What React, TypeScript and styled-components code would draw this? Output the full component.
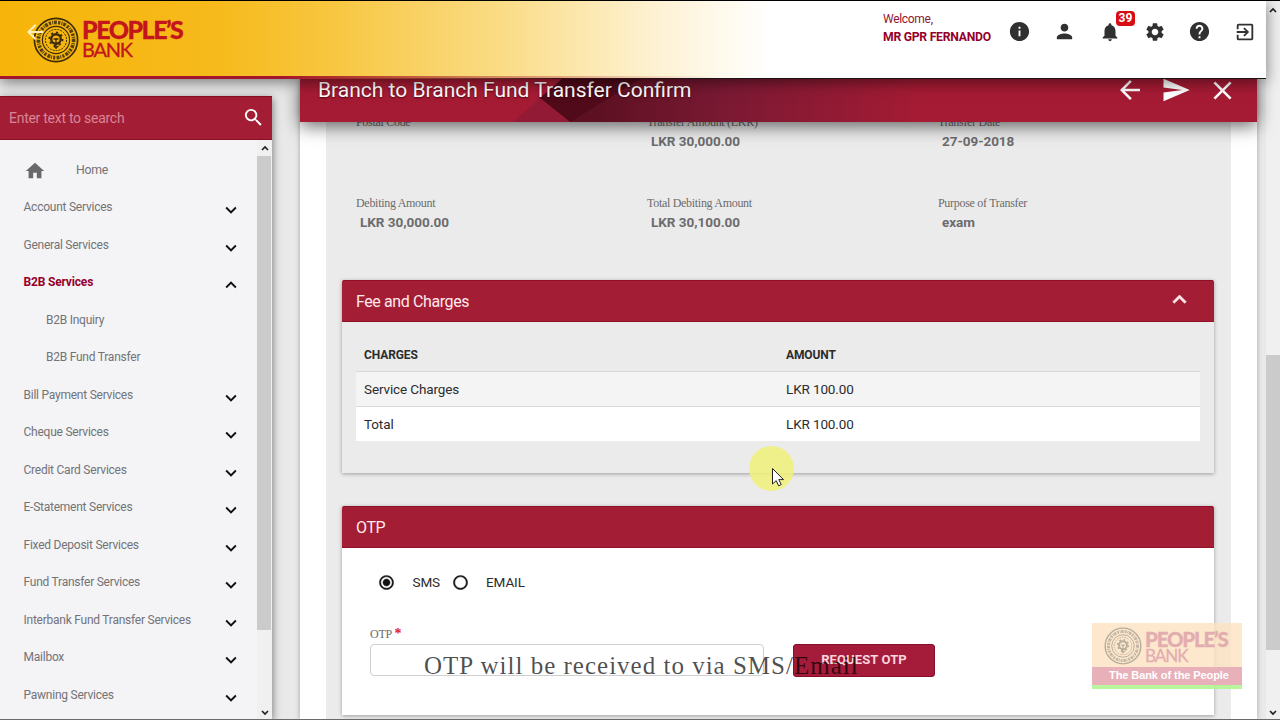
import React from 'react';
import styled, { createGlobalStyle } from 'styled-components';
import {
  MdArrowBack, MdClose, MdExitToApp, MdExpandLess, MdExpandMore, MdHelp, MdHome, MdInfo,
  MdNotifications, MdPerson, MdRadioButtonChecked, MdRadioButtonUnchecked, MdSearch, MdSend, MdSettings,
} from 'react-icons/md';

const crimson = '#a31d34';

const GlobalStyle = createGlobalStyle`
  * { box-sizing: border-box; }
  body { margin: 0; background: #e9e9e9; font-family: Roboto, "Liberation Sans", sans-serif; }
  svg { display: block; flex: none; }
`;

const Screen = styled.div`
  position: relative;
  width: 1280px;
  height: 720px;
  display: flex;
  overflow: hidden;
  border-top: 1px solid #000;
  border-bottom: 1px solid #6a6a6a;
  background: #e9e9e9;
`;

const Page = styled.div`
  width: 1266px;
  display: flex;
  flex-direction: column;
`;

const Header = styled.header`
  position: relative;
  z-index: 3;
  height: 78px;
  display: flex;
  justify-content: space-between;
  background:
    linear-gradient(90deg, rgba(60, 16, 24, 0) 300px, #3a1018 560px, #1c1416 700px) 0 100% / 100% 1px no-repeat,
    linear-gradient(90deg, #a3152a 0, #a3152a 280px, rgba(163, 21, 42, 0.45) 480px, rgba(163, 21, 42, 0) 720px) 0 100% / 100% 3px no-repeat,
    linear-gradient(90deg, #f7b50a 0, #f6ba1c 220px, #f8c63f 330px, #fadc85 500px, #fdf1d0 650px, #fff 770px);
  box-shadow: 0 3px 14px rgba(0, 0, 0, 0.5);
`;

const Brand = styled.div`
  position: relative;
  display: flex;
  gap: 3px;
  padding: 16px 0 0 33px;
`;

const BackArrow = styled.div`
  position: absolute;
  left: 23px;
  top: 19px;
  color: #fff0b8;
`;

const BrandName = styled.div`
  display: flex;
  flex-direction: column;
  padding-top: 2px;
  color: #c4141c;
  font-family: Lato, sans-serif;
`;

const BrandTop = styled.span`
  font-size: 25px;
  line-height: 21px;
  font-weight: 900;
  letter-spacing: -1.5px;
  -webkit-text-stroke: 0.3px currentColor;
`;

const BrandBottom = styled.span`
  font-size: 20px;
  line-height: 18px;
  letter-spacing: -1.3px;
  -webkit-text-stroke: 0.3px currentColor;
`;

const UserArea = styled.div`
  display: flex;
  margin-right: -1px;
`;

const Welcome = styled.div`
  display: flex;
  flex-direction: column;
  width: 114px;
  padding-top: 9px;
  font-size: 12px;
  line-height: 18px;
  letter-spacing: -0.3px;
  color: #8f1730;
  white-space: nowrap;
`;

const UserName = styled.b`
  font-size: 12.2px;
  letter-spacing: -0.26px;
  color: #96002a;
`;

const IconButton = styled.div`
  position: relative;
  width: 45px;
  height: 61px;
  display: flex;
  align-items: center;
  justify-content: center;
  color: #303030;
`;

const Badge = styled.span`
  position: absolute;
  left: 29px;
  top: 10px;
  width: 19px;
  height: 15px;
  border-radius: 4px;
  background: #d80c12;
  color: #fff;
  font-size: 12px;
  line-height: 15px;
  font-weight: 700;
  text-align: center;
`;

const Body = styled.div`
  flex: 1;
  min-height: 0;
  display: flex;
  gap: 28px;
`;

const Sidebar = styled.aside`
  width: 272px;
  margin-top: 17px;
  display: flex;
  flex-direction: column;
  box-shadow: 1px 2px 8px rgba(0, 0, 0, 0.45);
`;

const SearchBox = styled.div`
  height: 44px;
  flex: none;
  display: flex;
  align-items: center;
  justify-content: space-between;
  padding: 0 7px 1px 9px;
  background: ${crimson};
  border-top: 1px solid #8b0f26;
  border-bottom: 1px solid #8b0f26;
  color: #fff;
`;

const Placeholder = styled.span`
  padding-top: 1px;
  font-size: 14px;
  letter-spacing: -0.27px;
  color: #d98596;
`;

const MenuArea = styled.div`
  flex: 1;
  min-height: 0;
  display: flex;
  background: #f4f4f7;
`;

const Menu = styled.nav`
  flex: 1;
  padding-top: 11px;
  overflow: hidden;
`;

const MenuRow = styled.div<{ $indent?: boolean; $active?: boolean }>`
  height: 37.5px;
  display: flex;
  align-items: center;
  justify-content: space-between;
  padding: 0 15px 0 ${p => (p.$indent ? 46 : 23.5)}px;
  font-size: 12px;
  font-weight: ${p => (p.$active ? 700 : 400)};
  letter-spacing: ${p => (p.$active ? -0.17 : -0.24)}px;
  color: ${p => (p.$active ? '#96002a' : '#737376')};
  white-space: nowrap;

  svg { margin-top: 6px; color: #111; }
`;

const HomeRow = styled.div`
  height: 37.5px;
  display: flex;
  align-items: center;
  gap: 30px;
  padding-left: 24px;
  font-size: 12.3px;
  letter-spacing: -0.3px;
  color: #737376;
  svg { margin-top: 2px; }
`;

const Track = styled.div<{ $w: number }>`
  width: ${p => p.$w}px;
  flex: none;
  display: flex;
  flex-direction: column;
  align-items: center;
  background: #f0f0f0;
`;

const Space = styled.div<{ $h?: number }>`
  ${p => (p.$h === undefined ? 'flex: 1;' : `height: ${p.$h}px; flex: none;`)}
`;

const Thumb = styled.div<{ $h: number }>`
  height: ${p => p.$h}px;
  align-self: stretch;
  background: #cbcbcb;
`;

const MenuThumb = styled(Thumb)`
  margin-right: 1px;
`;

const Main = styled.main`
  width: 957px;
  display: flex;
  flex-direction: column;
  background: #fff;
  box-shadow: 0 0 5px rgba(0, 0, 0, 0.3);
`;

const TitleBar = styled.div`
  position: relative;
  z-index: 2;
  height: 43px;
  flex: none;
  display: flex;
  justify-content: space-between;
  align-items: flex-start;
  padding: 0 19px 0 18px;
  background: #a51b34;
  box-shadow: 0 4px 18px rgba(0, 0, 0, 0.6);
`;

const TitleArt = styled.svg`
  position: absolute;
  left: 0;
  top: 0;
`;

const Title = styled.h1`
  position: relative;
  margin: 0;
  font-size: 21px;
  line-height: 23px;
  font-weight: 400;
  color: #fff;
  text-shadow: 0 1px 2px rgba(60, 0, 10, 0.8);
`;

const TitleActions = styled.div`
  position: relative;
  display: flex;
  gap: 16px;
  margin-top: -4px;
  color: #fff;
`;

const Content = styled.div`
  flex: 1;
  min-height: 0;
  overflow: hidden;
  margin: 0 26px;
  padding: 0 17px 0 16px;
  background: #ebebeb;
`;

const FieldGrid = styled.div`
  display: grid;
  grid-template-columns: 291px 291px 1fr;
  grid-auto-rows: 81.5px;
  height: 164px;
  margin-top: -9.5px;
  padding-left: 14px;
`;

const Field = styled.div`
  display: flex;
  flex-direction: column;
`;

const FieldLabel = styled.span`
  font: 12px/18px "Liberation Serif", serif;
  letter-spacing: -0.3px;
  color: #6c6c6c;
`;

const FieldValue = styled.b`
  padding-left: 4px;
  font-size: 13.5px;
  line-height: 21px;
  letter-spacing: -0.03px;
  color: #6b6b6e;
`;

const Panel = styled.section<{ $top: number; $h: number; $bg: string }>`
  margin-top: ${p => p.$top}px;
  height: ${p => p.$h}px;
  background: ${p => p.$bg};
  box-shadow: 0 1px 4px rgba(0, 0, 0, 0.33);
`;

const PanelHead = styled.div`
  height: 42px;
  display: flex;
  align-items: center;
  justify-content: space-between;
  padding: 0 21px 0 14px;
  border: 1px solid #8f1028;
  border-width: 1px 0;
  border-radius: 2px 2px 0 0;
  background: ${crimson};
  color: #ffe9ec;
  font-size: 16px;
  letter-spacing: -0.4px;
  svg { margin-top: -4px; stroke: currentColor; stroke-width: 0.6; }
  svg path[fill="none"] { stroke: none; }
`;

const Charges = styled.div`
  padding: 16px 14px 0;
`;

const ChargeRow = styled.div<{ $kind: 'head' | 'odd' | 'even' }>`
  height: ${p => (p.$kind === 'head' ? 34 : 34.5)}px;
  display: grid;
  grid-template-columns: 422px 1fr;
  align-items: center;
  padding-left: 8px;
  border-bottom: ${p => (p.$kind === 'even' ? '0' : '1px')} solid #d8d8d8;
  background: ${p => ({ head: 'transparent', odd: '#f5f4f5', even: '#fff' })[p.$kind]};
  font-size: ${p => (p.$kind === 'head' ? 12 : 13.5)}px;
  font-weight: ${p => (p.$kind === 'head' ? 700 : 400)};
  letter-spacing: -0.12px;
  color: #2c2c2e;
`;

const Radios = styled.div`
  display: flex;
  align-items: center;
  height: 69px;
  margin-bottom: 1px;
  padding-left: 36px;
  font-size: 13.5px;
  letter-spacing: -0.1px;
  color: #2c2c2e;
  svg { color: #111; stroke: #111; stroke-width: 0.6; }
  svg path[fill="none"] { stroke: none; }
`;

const RadioLabel = styled.span<{ $w: number }>`
  width: ${p => p.$w}px;
  padding: 0 0 1px 17.5px;
`;

const OtpForm = styled.div`
  display: flex;
  gap: 29px;
  align-items: flex-end;
  height: 59px;
  padding-left: 28px;
`;

const OtpField = styled.div`
  width: 394px;
  height: 53px;
`;

const OtpLabel = styled.div`
  height: 20px;
  font: 12px/19px "Liberation Serif", serif;
  color: #6c6c6c;
  letter-spacing: -0.2px;
  span { color: #e0202a; font-size: 14px; font-weight: 700; }
`;

const OtpInput = styled.div`
  height: 32px;
  border: 1px solid #cfcfcf;
  border-radius: 4px;
  background: #fff;
`;

const RequestButton = styled.div`
  width: 142px;
  height: 33px;
  border: 1px solid #8b0c2c;
  border-radius: 3px;
  background: #a51b3a;
  color: #fbd5de;
  font-size: 13px;
  letter-spacing: 0.12px;
  font-weight: 700;
  line-height: 30px;
  text-align: center;
`;

const Caption = styled.div`
  position: absolute;
  left: 424px;
  top: 650px;
  font: 25px/30px "Liberation Serif", serif;
  letter-spacing: 1px;
  color: rgba(0, 0, 0, 0.7);
  white-space: nowrap;
`;

const Pointer = styled.svg`
  position: absolute;
  left: 748px;
  top: 444px;
`;

const Watermark = styled.div`
  position: absolute;
  left: 1092px;
  top: 622px;
  width: 150px;
  height: 66px;
  display: flex;
  flex-direction: column;
  border-bottom: 4px solid rgba(175, 245, 145, 0.9);
  background: rgba(252, 226, 194, 0.8) padding-box;
`;

const WatermarkTop = styled.div`
  height: 44px;
  display: flex;
  gap: 3px;
  padding: 4px 0 0 12px;
`;

const WatermarkName = styled(BrandName)`
  padding-top: 0;
  color: #e3adb0;
  ${BrandTop} { font-size: 20.5px; line-height: 19px; letter-spacing: -1.2px; padding-top: 3px; }
  ${BrandBottom} { font-size: 17px; line-height: 13px; letter-spacing: -1px; }
`;

const Slogan = styled.div`
  flex: 1;
  padding-left: 17px;
  background: #e8b1b9;
  color: #fff;
  font: 700 11px/17px "Liberation Sans", sans-serif;
  letter-spacing: -0.08px;
  white-space: nowrap;
`;

function Emblem({ size, color }: { size: number; color: string }) {
  return (
    <svg width={size} height={size} viewBox="0 0 46 46" fill="none" stroke={color}>
      <circle cx="23" cy="23" r="21.6" strokeWidth="1.7" />
      <circle cx="23" cy="23" r="17.6" strokeWidth="3.6" strokeDasharray="2.2 1.1 1 .8 3 1.3" opacity=".85" />
      <circle cx="23" cy="23" r="13.6" strokeWidth="1.2" />
      <circle cx="23" cy="23" r="10.6" strokeWidth="1" strokeDasharray="2 1" />
      <circle cx="23" cy="22" r="4.8" strokeWidth="2.4" />
      <circle cx="23" cy="22" r="6.6" strokeWidth="1.8" strokeDasharray="2.2 2.94" />
      <path d="M20.5 22h5M23 21v11M20.5 29l2.5 2 2.5-2" strokeWidth="1.3" />
    </svg>
  );
}

function ScrollArrow({ up }: { up?: boolean }) {
  return (
    <svg width="10" height="8" viewBox="0 0 10 8" fill="none" stroke="#222" strokeWidth="1.7">
      <path d={up ? 'M2 6L5 3l3 3' : 'M2 2l3 3 3-3'} />
    </svg>
  );
}

const services: { name: string; indent?: boolean; active?: boolean }[] = [
  { name: 'Account Services' },
  { name: 'General Services' },
  { name: 'B2B Services', active: true },
  { name: 'B2B Inquiry', indent: true },
  { name: 'B2B Fund Transfer', indent: true },
  { name: 'Bill Payment Services' },
  { name: 'Cheque Services' },
  { name: 'Credit Card Services' },
  { name: 'E-Statement Services' },
  { name: 'Fixed Deposit Services' },
  { name: 'Fund Transfer Services' },
  { name: 'Interbank Fund Transfer Services' },
  { name: 'Mailbox' },
  { name: 'Pawning Services' },
];

const fields = [
  ['Postal Code', ''],
  ['Transfer Amount (LKR)', 'LKR 30,000.00'],
  ['Transfer Date', '27-09-2018'],
  ['Debiting Amount', 'LKR 30,000.00'],
  ['Total Debiting Amount', 'LKR 30,100.00'],
  ['Purpose of Transfer', 'exam'],
];

export default function App() {
  return (
    <>
      <GlobalStyle />
      <Screen>
        <Page>
          <Header>
            <Brand>
              <Emblem size={46} color="#3d2c08" />
              <BackArrow><MdArrowBack size={24} /></BackArrow>
              <BrandName>
                <BrandTop>PEOPLE’S</BrandTop>
                <BrandBottom>BANK</BrandBottom>
              </BrandName>
            </Brand>
            <UserArea>
              <Welcome>
                Welcome,
                <UserName>MR GPR FERNANDO</UserName>
              </Welcome>
              <IconButton><MdInfo size={23} /></IconButton>
              <IconButton><MdPerson size={23} /></IconButton>
              <IconButton><MdNotifications size={22} /><Badge>39</Badge></IconButton>
              <IconButton><MdSettings size={22} /></IconButton>
              <IconButton><MdHelp size={23} /></IconButton>
              <IconButton><MdExitToApp size={22} /></IconButton>
            </UserArea>
          </Header>
          <Body>
            <Sidebar>
              <SearchBox>
                <Placeholder>Enter text to search</Placeholder>
                <MdSearch size={23} />
              </SearchBox>
              <MenuArea>
                <Menu>
                  <HomeRow><MdHome size={22} color="#68686b" />Home</HomeRow>
                  {services.map(s => (
                    <MenuRow key={s.name} $indent={s.indent} $active={s.active}>
                      {s.name}
                      {!s.indent && (s.active ? <MdExpandLess size={22} /> : <MdExpandMore size={22} />)}
                    </MenuRow>
                  ))}
                </Menu>
                <Track $w={15}>
                  <Space $h={4} />
                  <ScrollArrow up />
                  <Space $h={4} />
                  <MenuThumb $h={474} />
                  <Space />
                  <ScrollArrow />
                  <Space $h={2} />
                </Track>
              </MenuArea>
            </Sidebar>
            <Main>
              <TitleBar>
                <TitleArt width="957" height="43" viewBox="0 0 957 43">
                  <defs>
                    <linearGradient id="dusk" gradientUnits="userSpaceOnUse" x1="290" x2="620" y1="0" y2="0">
                      <stop offset="0" stopColor="#5c1022" />
                      <stop offset=".4" stopColor="#7a1933" />
                      <stop offset="1" stopColor="#a51b34" />
                    </linearGradient>
                  </defs>
                  <path d="M262 0H640V43H270L240 19Z" fill="url(#dusk)" />
                  <path d="M262 0H340L270 43L240 19Z" fill="#500a1a" />
                  <path d="M213 43L240 19L270 43Z" fill="#921a35" />
                </TitleArt>
                <Title>Branch to Branch Fund Transfer Confirm</Title>
                <TitleActions>
                  <MdArrowBack size={30} />
                  <MdSend size={30} />
                  <MdClose size={31} />
                </TitleActions>
              </TitleBar>
              <Content>
                <FieldGrid>
                  {fields.map(([label, value]) => (
                    <Field key={label}>
                      <FieldLabel>{label}</FieldLabel>
                      <FieldValue>{value}</FieldValue>
                    </Field>
                  ))}
                </FieldGrid>
                <Panel $top={3.5} $h={193} $bg="#ebebeb">
                  <PanelHead>Fee and Charges<MdExpandLess size={27} /></PanelHead>
                  <Charges>
                    <ChargeRow $kind="head"><span>CHARGES</span><span>AMOUNT</span></ChargeRow>
                    <ChargeRow $kind="odd"><span>Service Charges</span><span>LKR 100.00</span></ChargeRow>
                    <ChargeRow $kind="even"><span>Total</span><span>LKR 100.00</span></ChargeRow>
                  </Charges>
                </Panel>
                <Panel $top={33} $h={209} $bg="#fff">
                  <PanelHead>OTP</PanelHead>
                  <Radios>
                    <MdRadioButtonChecked size={17} />
                    <RadioLabel $w={56.5}>SMS</RadioLabel>
                    <MdRadioButtonUnchecked size={17} />
                    <RadioLabel $w={80}>EMAIL</RadioLabel>
                  </Radios>
                  <OtpForm>
                    <OtpField>
                      <OtpLabel>OTP <span>*</span></OtpLabel>
                      <OtpInput />
                    </OtpField>
                    <RequestButton>REQUEST OTP</RequestButton>
                  </OtpForm>
                </Panel>
              </Content>
            </Main>
          </Body>
        </Page>
        <Track $w={14}>
          <Space $h={5} />
          <ScrollArrow up />
          <Space $h={341} />
          <Thumb $h={295} />
          <Space />
          <ScrollArrow />
          <Space $h={2} />
        </Track>
        <Pointer width="48" height="48" viewBox="0 0 48 48">
          <circle cx="23.5" cy="23.5" r="22.5" fill="#f0f07c" opacity=".88" />
          <path d="M24.5 23.5V39l3.7-3.4 2.4 5.2 2.6-1.2-2.4-5H35.5Z" fill="#fff" stroke="#222" strokeWidth="1" />
        </Pointer>
        <Caption>OTP will be received to via SMS/Email</Caption>
        <Watermark>
          <WatermarkTop>
            <Emblem size={38} color="#b7ad9c" />
            <WatermarkName>
              <BrandTop>PEOPLE’S</BrandTop>
              <BrandBottom>BANK</BrandBottom>
            </WatermarkName>
          </WatermarkTop>
          <Slogan>The Bank of the People</Slogan>
        </Watermark>
      </Screen>
    </>
  );
}
